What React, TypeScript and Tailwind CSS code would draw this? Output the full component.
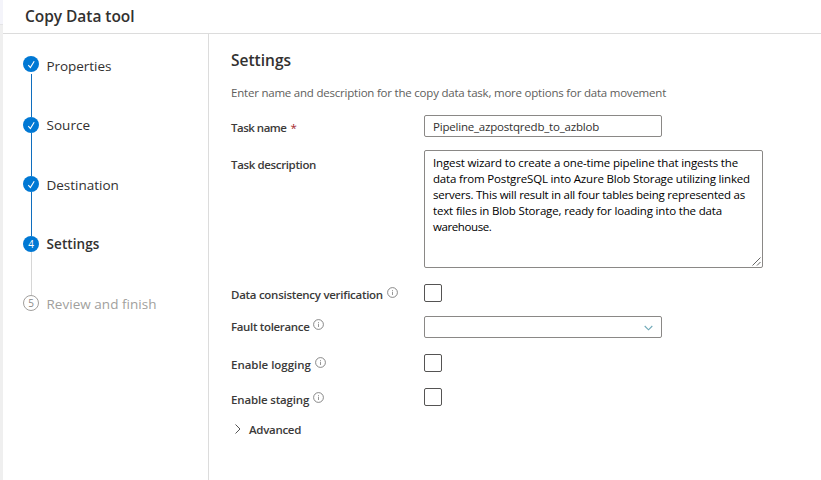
import type { ReactNode } from "react";

function CheckDot() {
  return (
    <svg width="16" height="16" viewBox="0 0 16 16" className="block shrink-0">
      <circle cx="8" cy="8" r="8" fill="#0078d4" />
      <path d="M5.3 9.1 7.4 11.6 11.2 5.2" fill="none" stroke="#fff" strokeWidth="1.1" />
    </svg>
  );
}

function Info() {
  return (
    <svg width="11" height="11" viewBox="0 0 11 11" className="mt-[2px] ml-1 block shrink-0">
      <circle cx="5.5" cy="5.5" r="4.9" fill="none" stroke="#6b6b6b" strokeWidth="0.8" />
      <path d="M5.5 4.7v3.3M5.5 3v.9" stroke="#7d7d7d" strokeWidth="0.8" />
    </svg>
  );
}

function Box() {
  return <div className="size-[18px] rounded-[2px] border border-[#555453]" />;
}

function Row({
  label,
  className,
  labelClass,
  info,
  required,
  children,
}: {
  label: string;
  className: string;
  labelClass: string;
  info?: boolean;
  required?: boolean;
  children: ReactNode;
}) {
  return (
    <div className={`flex items-start ${className}`}>
      <div className="flex h-0 w-[193px] shrink-0 items-start text-[11.5px] leading-5 font-semibold whitespace-nowrap text-[#3b3a39]">
        <div className={`flex ${labelClass}`}>
          <span>{label}</span>
          {required && <span className="ml-[4px] font-normal text-[#a4262c]">*</span>}
          {info && <Info />}
        </div>
      </div>
      {children}
    </div>
  );
}

export default function App() {
  return (
    <div className="flex h-[480px] w-[821px] overflow-hidden bg-white font-['Open_Sans','Noto_Sans',sans-serif] text-[#323130]">
      <div className="flex w-[3px] shrink-0 flex-col bg-[#efefef]">
        <div className="h-[25px] border-b border-[#e4e4e6] bg-[#f4f4fa]" />
      </div>
      <div className="flex flex-1 flex-col">
        <header className="flex h-[34px] shrink-0 items-start border-b border-[#dcdcdc] pt-[5px] pl-[22px]">
          <h1 className="text-[15.5px] leading-[22px] font-semibold tracking-[-0.045px]">Copy Data tool</h1>
        </header>
        <div className="flex flex-1">
          <nav className="flex w-[206px] shrink-0 border-r border-[#dcdcdc] pt-[22px] pl-5 text-[13.5px] leading-5">
            <div className="flex w-4 flex-col items-center">
              <CheckDot />
              <div className="mt-[2px] ml-px h-[43px] w-px bg-[#106ebe]" />
              <CheckDot />
              <div className="ml-px h-[43px] w-px bg-[#106ebe]" />
              <CheckDot />
              <div className="ml-px h-[44px] w-px bg-[#106ebe]" />
              <div className="flex size-4 shrink-0 items-center justify-center rounded-full bg-[#0078d4] text-[10px] leading-none font-medium text-white">
                4
              </div>
              <div className="ml-px h-[43px] w-px bg-[#d6d6d6]" />
              <div className="flex size-4 shrink-0 items-center justify-center rounded-full border border-[#a19f9d] text-[10px] leading-none text-[#8a8886]">
                5
              </div>
            </div>
            <ul className="ml-[7.5px] flex flex-col">
              <li className="h-[59px] tracking-[-0.055px]">Properties</li>
              <li className="h-[60px] tracking-[0.04px]">Source</li>
              <li className="h-[59px] tracking-[-0.01px]">Destination</li>
              <li className="h-[60px] font-semibold tracking-[0.09px]">Settings</li>
              <li className="h-[20px] tracking-[0.029px] text-[#a19f9d]">Review and finish</li>
            </ul>
          </nav>
          <main className="flex flex-1 flex-col pt-[16px] pl-[22px]">
            <h2 className="text-[15.5px] leading-5 font-semibold">Settings</h2>
            <p className="mt-[13px] text-[11.5px] leading-5 tracking-[-0.215px] text-[#605e5c]">
              Enter name and description for the copy data task, more options for data movement
            </p>
            <Row label="Task name" required className="mt-[12px]" labelClass="mt-[3px] tracking-[-0.5px]">
              <div className="h-[22px] w-[238px] rounded-[2px] border border-[#8a8886] pl-2 text-[11.5px] leading-[22px] tracking-[-0.2px]">
                Pipeline_azpostqredb_to_azblob
              </div>
            </Row>
            <Row label="Task description" className="mt-[13px]" labelClass="mt-[5px] tracking-[-0.365px]">
              <div className="flex h-[118px] w-[339px] flex-col justify-between rounded-[2px] border border-[#8a8886] pt-[4px] pl-2 text-[11.5px] leading-4 text-black">
                <div className="whitespace-nowrap">
                  <div className="tracking-[-0.146px]">Ingest wizard to create a one-time pipeline that ingests the</div>
                  <div className="tracking-[-0.166px]">data from PostgreSQL into Azure Blob Storage utilizing linked</div>
                  <div className="tracking-[-0.224px]">servers. This will result in all four tables being represented as</div>
                  <div className="tracking-[-0.157px]">text files in Blob Storage, ready for loading into the data</div>
                  <div className="tracking-[-0.4px]">warehouse.</div>
                </div>
                <svg width="9" height="9" viewBox="0 0 9 9" className="mr-px mb-px block self-end">
                  <path d="M.5 8.5 8.5.5M5 8.5 8.5 5" stroke="#555" strokeWidth="0.9" />
                </svg>
              </div>
            </Row>
            <Row label="Data consistency verification" info className="mt-4" labelClass="mt-px tracking-[-0.275px]">
              <Box />
            </Row>
            <Row label="Fault tolerance" info className="mt-[14px]" labelClass="mt-px tracking-[-0.34px]">
              <div className="flex h-[22px] w-[238px] items-center justify-end rounded-[2px] border border-[#8a8886] pr-2">
                <svg width="9" height="6" viewBox="0 0 9 6" className="mt-px">
                  <path d="M.7 1 4.5 4.8 8.3 1" fill="none" stroke="#6fa9b8" strokeWidth="1.1" />
                </svg>
              </div>
            </Row>
            <Row label="Enable logging" info className="mt-4" labelClass="mt-px tracking-[-0.03px]">
              <Box />
            </Row>
            <Row label="Enable staging" info className="mt-4" labelClass="mt-[2px] tracking-[-0.16px]">
              <Box />
            </Row>
            <div className="mt-[14px] flex items-center pl-[3px] text-[11.5px] leading-5 font-semibold tracking-[-0.297px] text-[#3b3a39]">
              <svg width="8" height="10" viewBox="0 0 8 10" className="mr-[7px] mb-[2px]">
                <path d="M1.5.5 6 5 1.5 9.5" fill="none" stroke="#555" strokeWidth="1" />
              </svg>
              Advanced
            </div>
          </main>
        </div>
      </div>
    </div>
  );
}
